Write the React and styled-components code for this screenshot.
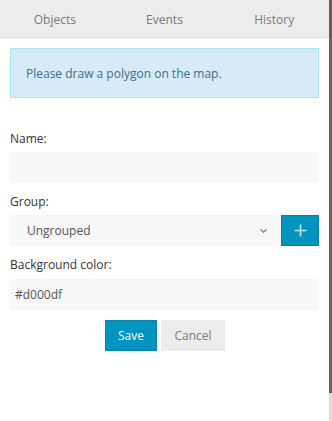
import styled, { createGlobalStyle } from "styled-components";

const GlobalStyle = createGlobalStyle`
  html, body {
    margin: 0;
    padding: 0;
    background: #ffffff;
  }
  body {
    font-family: "Open Sans", "Liberation Sans", sans-serif;
    font-size: 12px;
  }
`;

const Frame = styled.div`
  display: flex;
  width: 332px;
  height: 421px;
  overflow: hidden;
`;

const Panel = styled.div`
  width: 329px;
  display: flex;
  flex-direction: column;
  background: #fff;
`;

const Edge = styled.div`
  width: 3px;
  display: flex;
  flex-direction: column;
  background: #dcdcdc;
`;

const EdgeDark = styled.div`
  height: 393px;
  background: #6e5e54;
`;

const Tabs = styled.nav`
  display: grid;
  grid-template-columns: repeat(3, 1fr);
  height: 39px;
  background: #ececec;
`;

const Tab = styled.div`
  display: flex;
  align-items: center;
  justify-content: center;
  color: #7a7a7a;
  font-size: 12px;
`;

const Body = styled.div`
  padding: 9px 10px 0 10px;
  display: flex;
  flex-direction: column;
`;

const Alert = styled.div`
  box-sizing: border-box;
  background: #d6eaf7;
  border: 1px solid #a8e6f0;
  color: #3a6f90;
  height: 50px;
  display: flex;
  align-items: center;
  padding: 0 15px;
  font-size: 12px;
  margin-bottom: 32px;
`;

const Label = styled.label`
  display: block;
  color: #333;
  font-size: 12px;
  line-height: 18px;
  margin-bottom: ${(p) => p.$gap || 4}px;
`;

const Field = styled.div`
  margin-bottom: 10px;
`;

const Input = styled.div`
  height: 31px;
  background: #f7f7f7;
  border-radius: 2px;
  display: flex;
  align-items: center;
  padding: 0 5px;
  color: #555;
  font-size: 12px;
`;

const SelectRow = styled.div`
  display: flex;
`;

const Select = styled.div`
  flex: 1;
  height: 31px;
  background: #f7f7f7;
  display: flex;
  align-items: center;
  justify-content: space-between;
  padding: 0 13px 0 17px;
  color: #555;
  font-size: 12px;
`;

const AddButton = styled.div`
  width: 36px;
  height: 29px;
  background: #0095bf;
  border: 1px solid #0a7fa3;
  display: flex;
  align-items: center;
  justify-content: center;
`;

const Actions = styled.div`
  display: flex;
  justify-content: center;
  gap: 4px;
  margin-left: 1px;
`;

const Button = styled.div`
  box-sizing: border-box;
  width: ${(p) => p.$w}px;
  height: 31px;
  display: flex;
  align-items: center;
  justify-content: center;
  font-size: 12px;
  background: ${(p) => (p.$primary ? "#0095bf" : "#ececec")};
  color: ${(p) => (p.$primary ? "#fff" : "#7a7a7a")};
  border: 1px solid ${(p) => (p.$primary ? "#0a82a8" : "#ececec")};
`;

export default function App() {
  return (
    <>
      <GlobalStyle />
      <Frame>
        <Panel>
          <Tabs>
            <Tab>Objects</Tab>
            <Tab>Events</Tab>
            <Tab>History</Tab>
          </Tabs>
          <Body>
            <Alert>Please draw a polygon on the map.</Alert>
            <Field>
              <Label>Name:</Label>
              <Input />
            </Field>
            <Field>
              <Label>Group:</Label>
              <SelectRow>
                <Select>
                  <span>Ungrouped</span>
                  <svg width="9" height="6" viewBox="0 0 9 6">
                    <path d="M1.5 1.5 L4.5 4.3 L7.5 1.5" fill="none" stroke="#777" strokeWidth="1.2" />
                  </svg>
                </Select>
                <AddButton>
                  <svg width="13" height="13" viewBox="0 0 13 13">
                    <path d="M6.5 0.5 V12.5 M0.5 6.5 H12.5" stroke="#bfe6f2" strokeWidth="1.6" />
                  </svg>
                </AddButton>
              </SelectRow>
            </Field>
            <Field>
              <Label $gap={5}>Background color:</Label>
              <Input>#d000df</Input>
            </Field>
            <Actions>
              <Button $primary $w={52}>Save</Button>
              <Button $w={64}>Cancel</Button>
            </Actions>
          </Body>
        </Panel>
        <Edge>
          <EdgeDark />
        </Edge>
      </Frame>
    </>
  );
}
